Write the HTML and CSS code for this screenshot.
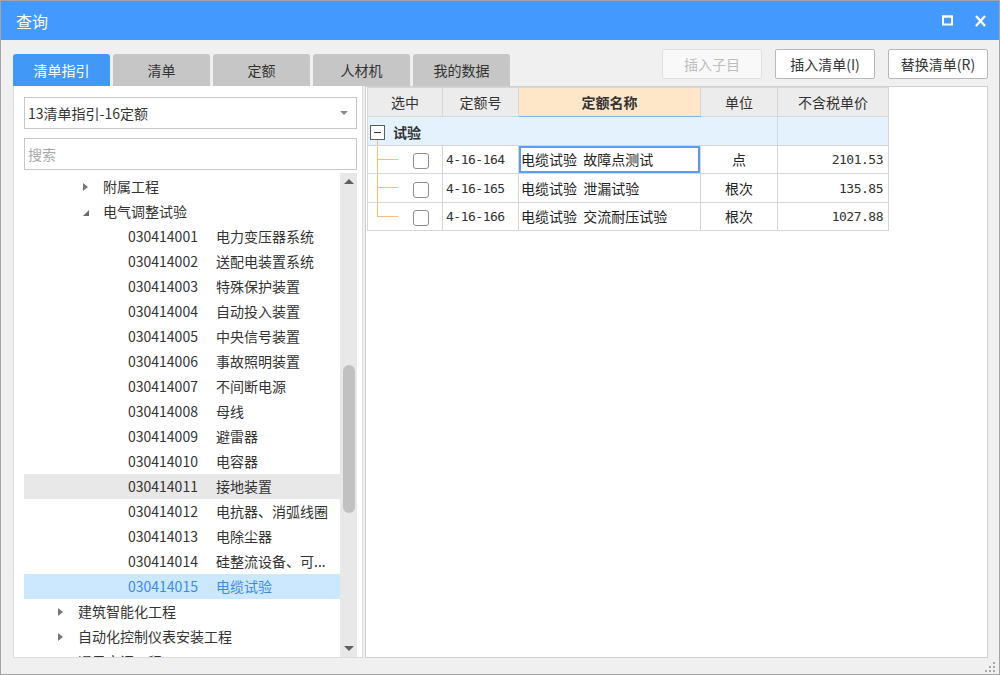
FILE: index.html
```html
<!DOCTYPE html>
<html lang="zh-CN">
<head>
<meta charset="utf-8">
<title>查询</title>
<link rel="stylesheet" href="styles.css">
</head>
<body>
<div class="window">
  <div class="titlebar">
    <span class="title">查询</span>
    <div class="win-ctrls">
      <svg class="ico-max" width="11" height="11" viewBox="0 0 11 11"><rect x="1" y="1.5" width="9" height="8" fill="none" stroke="#fff" stroke-width="2"/><rect x="0" y="0.5" width="11" height="2" fill="#fff"/></svg>
      <svg class="ico-close" width="11" height="12" viewBox="0 0 11 12"><path d="M1 1 L10 11 M10 1 L1 11" stroke="#fff" stroke-width="2.2" fill="none"/></svg>
    </div>
  </div>

  <div class="toolbar">
    <div class="tabs">
      <div class="tab active">清单指引</div>
      <div class="tab">清单</div>
      <div class="tab">定额</div>
      <div class="tab">人材机</div>
      <div class="tab">我的数据</div>
    </div>
    <div class="actions">
      <button class="btn disabled">插入子目</button>
      <button class="btn">插入清单(I)</button>
      <button class="btn">替换清单(R)</button>
    </div>
  </div>

  <div class="main">
    <div class="left-panel">
      <div class="select"><span>13清单指引-16定额</span><span class="caret"></span></div>
      <div class="search">搜索</div>
      <div class="tree-wrap">
        <ul class="tree">
          <li class="node l2"><span class="exp closed"></span>附属工程</li>
          <li class="node l2"><span class="exp open"></span>电气调整试验</li>
          <li class="node l3"><span class="exp"></span><span class="code">030414001</span>电力变压器系统</li>
          <li class="node l3"><span class="exp"></span><span class="code">030414002</span>送配电装置系统</li>
          <li class="node l3"><span class="exp"></span><span class="code">030414003</span>特殊保护装置</li>
          <li class="node l3"><span class="exp"></span><span class="code">030414004</span>自动投入装置</li>
          <li class="node l3"><span class="exp"></span><span class="code">030414005</span>中央信号装置</li>
          <li class="node l3"><span class="exp"></span><span class="code">030414006</span>事故照明装置</li>
          <li class="node l3"><span class="exp"></span><span class="code">030414007</span>不间断电源</li>
          <li class="node l3"><span class="exp"></span><span class="code">030414008</span>母线</li>
          <li class="node l3"><span class="exp"></span><span class="code">030414009</span>避雷器</li>
          <li class="node l3"><span class="exp"></span><span class="code">030414010</span>电容器</li>
          <li class="node l3 hover"><span class="exp"></span><span class="code">030414011</span>接地装置</li>
          <li class="node l3"><span class="exp"></span><span class="code">030414012</span>电抗器、消弧线圈</li>
          <li class="node l3"><span class="exp"></span><span class="code">030414013</span>电除尘器</li>
          <li class="node l3"><span class="exp"></span><span class="code">030414014</span>硅整流设备、可...</li>
          <li class="node l3 selected"><span class="exp"></span><span class="code">030414015</span>电缆试验</li>
          <li class="node l1"><span class="exp closed"></span>建筑智能化工程</li>
          <li class="node l1"><span class="exp closed"></span>自动化控制仪表安装工程</li>
          <li class="node l1"><span class="exp closed"></span>通风空调工程</li>
        </ul>
        <div class="vscroll">
          <div class="sarrow"><span class="tri-up"></span></div>
          <div class="strack"><div class="sthumb"></div></div>
          <div class="sarrow"><span class="tri-down"></span></div>
        </div>
      </div>
    </div>

    <div class="right-panel">
      <table class="grid">
        <colgroup>
          <col class="c1"><col class="c2"><col class="c3"><col class="c4"><col class="c5">
        </colgroup>
        <thead>
          <tr>
            <th>选中</th>
            <th>定额号</th>
            <th class="sorted">定额名称</th>
            <th>单位</th>
            <th>不含税单价</th>
          </tr>
        </thead>
        <tbody>
          <tr class="group">
            <td colspan="4" class="gcell"><span class="minus-box"></span><b>试验</b></td>
            <td></td>
          </tr>
          <tr class="row r1">
            <td class="sel mid"><span class="cb"></span></td>
            <td class="mono">4-16-164</td>
            <td class="name current">电缆试验  故障点测试</td>
            <td class="unit">点</td>
            <td class="mono price">2101.53</td>
          </tr>
          <tr class="row r2">
            <td class="sel mid"><span class="cb"></span></td>
            <td class="mono">4-16-165</td>
            <td class="name">电缆试验  泄漏试验</td>
            <td class="unit">根次</td>
            <td class="mono price">135.85</td>
          </tr>
          <tr class="row r3">
            <td class="sel end"><span class="cb"></span></td>
            <td class="mono">4-16-166</td>
            <td class="name">电缆试验  交流耐压试验</td>
            <td class="unit">根次</td>
            <td class="mono price">1027.88</td>
          </tr>
        </tbody>
      </table>
    </div>
  </div>

  <div class="statusbar">
    <svg class="grip" width="10" height="10" viewBox="0 0 10 10">
      <rect x="8" y="0" width="2" height="2" fill="#a8a8a8"/>
      <rect x="4" y="4" width="2" height="2" fill="#a8a8a8"/>
      <rect x="8" y="4" width="2" height="2" fill="#a8a8a8"/>
      <rect x="0" y="8" width="2" height="2" fill="#a8a8a8"/>
      <rect x="4" y="8" width="2" height="2" fill="#a8a8a8"/>
      <rect x="8" y="8" width="2" height="2" fill="#a8a8a8"/>
    </svg>
  </div>
</div>
</body>
</html>
```

FILE: styles.css
```css
* { box-sizing: border-box; }

html, body {
  margin: 0;
  padding: 0;
}

body {
  font-family: "Noto Sans CJK SC", "Microsoft YaHei", "Noto Sans", sans-serif;
  font-size: 14px;
  color: #333;
  background: #f0f0f0;
}

.window {
  width: 1000px;
  height: 675px;
  border: 1px solid #a4a4a4;
  background: #f0f0f0;
  display: flex;
  flex-direction: column;
  overflow: hidden;
}

/* title bar */
.titlebar {
  height: 39px;
  flex: none;
  background: #4399fe;
  display: flex;
  align-items: center;
  justify-content: space-between;
  padding: 0 13px 0 15px;
}
.title {
  color: #fff;
  font-size: 16px;
  line-height: 20px;
  margin-top: 1px;
}
.win-ctrls {
  display: flex;
  align-items: center;
  gap: 22px;
}
.ico-max, .ico-close { display: block; }

/* toolbar with tabs and buttons */
.toolbar {
  height: 46px;
  flex: none;
  display: flex;
  justify-content: space-between;
  align-items: flex-end;
  padding: 0 11px 0 12px;
}
.tabs {
  display: flex;
  gap: 3px;
}
.tab {
  width: 97px;
  height: 32px;
  background: #c6c6c6;
  border-radius: 3px 3px 0 0;
  text-align: center;
  line-height: 32px;
  font-size: 14px;
  color: #333;
}
.tab.active {
  background: #4298f7;
  color: #fff;
}
.actions {
  align-self: flex-start;
  margin-top: 9px;
  display: flex;
  gap: 13px;
}
.btn {
  width: 100px;
  height: 30px;
  border: 1px solid #b9b9b9;
  border-radius: 2px;
  background: #fff;
  font-family: inherit;
  font-size: 14px;
  color: #333;
  padding: 0;
  line-height: 28px;
}
.btn.disabled {
  color: #bdbdbd;
  border-color: #e0e0e0;
  background: #f9f9f9;
}

/* main area */
.main {
  height: 572px;
  flex: none;
  display: flex;
  gap: 2px;
  padding: 0 11px 0 12px;
}

.left-panel {
  width: 350px;
  background: #fff;
  border: 1px solid #dcdcdc;
  border-top: none;
  padding: 11px 5px 0 10px;
  display: flex;
  flex-direction: column;
}

.select {
  height: 32px;
  flex: none;
  border: 1px solid #c8c8c8;
  display: flex;
  align-items: center;
  justify-content: space-between;
  padding: 0 8px 0 3px;
  font-size: 14px;
  color: #333;
}
.caret {
  width: 0;
  height: 0;
  border-left: 4px solid transparent;
  border-right: 4px solid transparent;
  border-top: 4px solid #8a8a8a;
}
.search {
  height: 32px;
  flex: none;
  margin-top: 9px;
  border: 1px solid #c8c8c8;
  padding: 0 3px;
  line-height: 30px;
  color: #a8a8a8;
  font-size: 14px;
}

.tree-wrap {
  flex: 1;
  min-height: 0;
  margin-top: 3px;
  display: flex;
  overflow: hidden;
}
.tree {
  list-style: none;
  margin: 0;
  padding: 1px 0 0 0;
  width: 316px;
  overflow: hidden;
}
.node {
  height: 25px;
  line-height: 25px;
  white-space: nowrap;
  display: flex;
  align-items: center;
  color: #333;
}
.node.l1 { padding-left: 29px; }
.node.l2 { padding-left: 54px; }
.node.l3 { padding-left: 79px; }
.node.hover { background: #e8e8e8; }
.node.selected { background: #cce8ff; color: #3b8be6; }

.exp {
  width: 25px;
  height: 25px;
  flex: none;
  display: flex;
  align-items: center;
  padding-left: 5px;
}
.exp.closed::before {
  content: "";
  width: 0;
  height: 0;
  border-top: 4px solid transparent;
  border-bottom: 4px solid transparent;
  border-left: 5px solid #777;
}
.exp.open::before {
  content: "";
  width: 0;
  height: 0;
  margin-top: 3px;
  border-left: 6px solid transparent;
  border-bottom: 6px solid #6a6a6a;
}
.code {
  display: inline-block;
  width: 88px;
}

/* scrollbar */
.vscroll {
  width: 17px;
  flex: none;
  background: #e8e8e8;
  display: flex;
  flex-direction: column;
}
.sarrow {
  height: 17px;
  flex: none;
  display: flex;
  align-items: center;
  justify-content: center;
}
.tri-up {
  width: 0; height: 0;
  border-left: 5px solid transparent;
  border-right: 5px solid transparent;
  border-bottom: 5px solid #606060;
}
.tri-down {
  width: 0; height: 0;
  border-left: 5px solid transparent;
  border-right: 5px solid transparent;
  border-top: 5px solid #606060;
}
.strack {
  flex: 1;
  padding-top: 175px;
  display: flex;
  justify-content: center;
}
.sthumb {
  width: 12px;
  height: 148px;
  border-radius: 6px;
  background: #c1c1c1;
}

/* right panel & grid */
.right-panel {
  flex: 1;
  background: #fff;
  border: 1px solid #cfcfcf;
  padding-left: 1px;
}
.grid {
  border-collapse: collapse;
  table-layout: fixed;
  width: 521px;
  font-size: 14px;
}
.c1 { width: 75px; }
.c2 { width: 76px; }
.c3 { width: 182px; }
.c4 { width: 77px; }
.c5 { width: 111px; }

.grid th, .grid td {
  border: 1px solid #d6d6d6;
  padding: 0;
  white-space: nowrap;
  overflow: hidden;
}
.grid th {
  height: 29px;
  background: #ececec;
  font-weight: normal;
  color: #333;
  text-align: center;
  line-height: 27px;
}
.grid th.sorted {
  background: #fee6c8;
  font-weight: bold;
  border-bottom: 1px solid #7fb2ec;
}
.group td {
  height: 29px;
  background: #e4f2fe;
}
.grid td.gcell {
  padding-left: 2px;
  background:
    linear-gradient(#f6bd78, #f6bd78) 9px 23px / 1px 8px no-repeat,
    #e4f2fe;
}
.gcell b {
  font-weight: bold;
  margin-left: 8px;
  vertical-align: middle;
}
.minus-box {
  display: inline-block;
  width: 15px;
  height: 15px;
  border: 1px solid #5c5c5c;
  vertical-align: middle;
  background: linear-gradient(#333, #333) 3px 6px / 7px 1px no-repeat, #fff;
}

.row td {
  height: 29px;
  line-height: 27px;
}
.row.r1 td, .row.r3 td { height: 28px; }
.grid td.sel {
  padding-left: 45px;
}
.grid td.sel.mid {
  background:
    linear-gradient(#f6bd78, #f6bd78) 9px 0 / 1px 100% no-repeat,
    linear-gradient(#f6bd78, #f6bd78) 10px 13px / 20px 1px no-repeat,
    #fff;
}
.grid td.sel.end {
  background:
    linear-gradient(#f6bd78, #f6bd78) 9px 0 / 1px 14px no-repeat,
    linear-gradient(#f6bd78, #f6bd78) 10px 13px / 20px 1px no-repeat,
    #fff;
}
.cb {
  display: inline-block;
  width: 16px;
  height: 16px;
  border: 1px solid #8c8c8c;
  border-radius: 3px;
  background: #fff;
  vertical-align: middle;
}
.mono {
  font-family: "DejaVu Sans Mono", "Liberation Mono", monospace;
  font-size: 13px;
  letter-spacing: -0.5px;
  color: #333;
}
.grid td.mono { padding-left: 3px; }
.grid td.price {
  text-align: right;
  padding-left: 0;
  padding-right: 5px;
}
.grid td.name {
  padding-left: 2px;
  color: #222;
  white-space: pre;
}
.name.current {
  box-shadow: inset 0 0 0 2px #5a9fee;
}
.unit {
  text-align: center;
  color: #222;
}

/* status bar */
.statusbar {
  flex: 1;
  display: flex;
  justify-content: flex-end;
  align-items: center;
  padding-right: 4px;
}
.grip { display: block; margin-top: 2px; }
```
